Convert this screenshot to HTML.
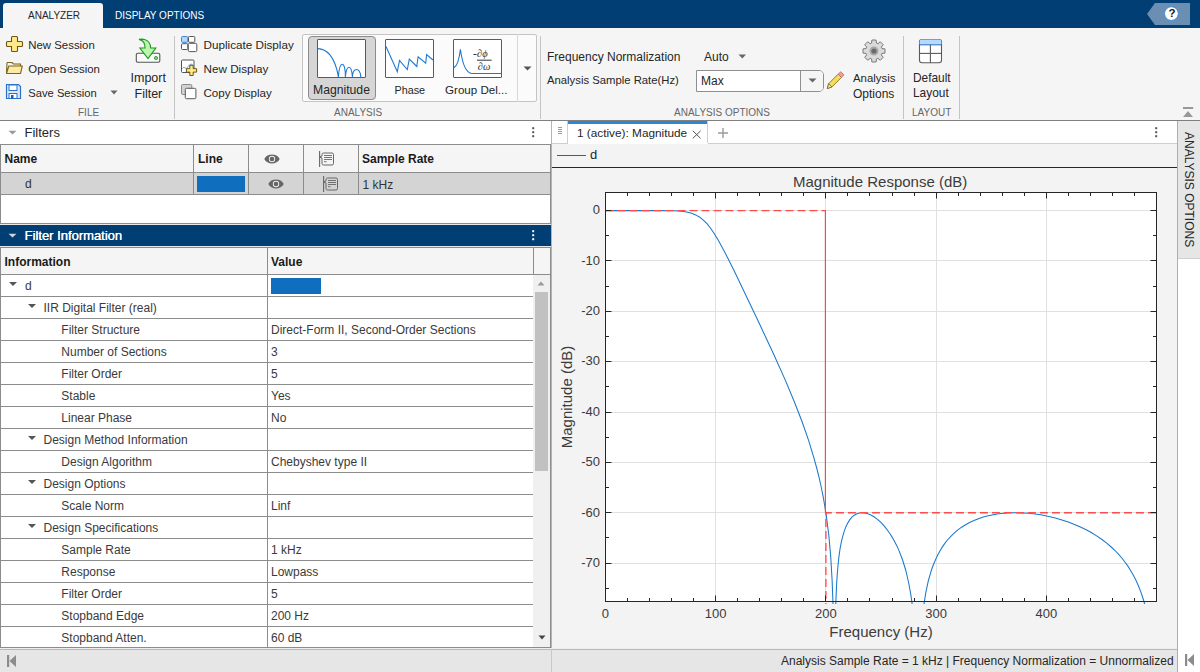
<!DOCTYPE html><html><head><meta charset="utf-8"><style>
html,body{margin:0;padding:0}
body{width:1200px;height:672px;overflow:hidden;position:relative;background:#f5f5f5;font-family:"Liberation Sans",sans-serif}
.a{position:absolute;box-sizing:border-box}
.t{position:absolute;white-space:nowrap;line-height:1}
svg{position:absolute;overflow:visible}
</style></head><body>
<div class="a" style="left:0px;top:0px;width:1200px;height:28px;background:#003e74"></div>
<div class="a" style="left:3px;top:3px;width:100px;height:25px;background:#f5f5f5;border-radius:3px 3px 0 0"></div>
<div class="t" style="left:28px;top:10.54px;font-size:10px;color:#262626;font-weight:400;">ANALYZER</div>
<div class="t" style="left:115px;top:10.54px;font-size:10px;color:#ffffff;font-weight:400;">DISPLAY OPTIONS</div>
<svg style="left:0;top:0" width="1200" height="28"><path d="M1155,3 L1190,3 L1190,25 L1155,25 L1147,14 Z" fill="#6b8fb2"/><circle cx="1171.4" cy="13.6" r="6.9" fill="#fff" stroke="#3d8fe0" stroke-width="1"/></svg>
<div class="t" style="left:1168.6px;top:8.07px;font-size:11.5px;color:#1a1a1a;font-weight:700;">?</div>
<div class="a" style="left:0px;top:28px;width:1200px;height:92px;background:#f5f5f5"></div>
<div class="a" style="left:0px;top:120px;width:1200px;height:1px;background:#808080"></div>
<div class="a" style="left:174px;top:36px;width:1px;height:83px;background:#c4c4c4"></div>
<div class="a" style="left:540px;top:36px;width:1px;height:83px;background:#c4c4c4"></div>
<div class="a" style="left:903px;top:36px;width:1px;height:83px;background:#c4c4c4"></div>
<div class="a" style="left:959px;top:36px;width:1px;height:83px;background:#c4c4c4"></div>
<div class="t" style="left:78px;top:108.23px;font-size:10px;color:#666;font-weight:400;">FILE</div>
<div class="t" style="left:334px;top:108.23px;font-size:10px;color:#666;font-weight:400;">ANALYSIS</div>
<div class="t" style="left:674px;top:108.23px;font-size:10px;color:#666;font-weight:400;">ANALYSIS OPTIONS</div>
<div class="t" style="left:912px;top:108.23px;font-size:10px;color:#666;font-weight:400;">LAYOUT</div>
<div class="t" style="left:28.3px;top:39.95px;font-size:11.4px;color:#262626;font-weight:400;">New Session</div>
<div class="t" style="left:28.3px;top:63.95px;font-size:11.4px;color:#262626;font-weight:400;">Open Session</div>
<div class="t" style="left:28.3px;top:88.12px;font-size:11.2px;color:#262626;font-weight:400;">Save Session</div>
<div class="t" style="left:130.5px;top:71.92px;font-size:12.5px;color:#262626;font-weight:400;">Import</div>
<div class="t" style="left:134.5px;top:87.72px;font-size:12.5px;color:#262626;font-weight:400;">Filter</div>
<div class="t" style="left:203.5px;top:39.10px;font-size:11.7px;color:#262626;font-weight:400;">Duplicate Display</div>
<div class="t" style="left:203.5px;top:63.10px;font-size:11.7px;color:#262626;font-weight:400;">New Display</div>
<div class="t" style="left:203.5px;top:87.18px;font-size:11.6px;color:#262626;font-weight:400;">Copy Display</div>
<div class="a" style="left:302px;top:34px;width:235px;height:68px;background:#fbfbfb;border:1px solid #c4c4c4;border-radius:2px"></div>
<div class="a" style="left:517px;top:34px;width:1px;height:68px;background:#d8d8d8"></div>
<div class="a" style="left:308px;top:36px;width:68px;height:64px;background:#d6d6d6;border:1px solid #8c8c8c;border-radius:4px"></div>
<div class="a" style="left:317px;top:39px;width:49px;height:39px;background:#fff;border:1px solid #5a5a5a;border-radius:1px"></div>
<div class="a" style="left:385px;top:39px;width:49px;height:39px;background:#fff;border:1px solid #5a5a5a;border-radius:1px"></div>
<div class="a" style="left:453px;top:39px;width:49px;height:39px;background:#fff;border:1px solid #5a5a5a;border-radius:1px"></div>
<div class="t" style="left:313px;top:83.67px;font-size:12.2px;color:#262626;font-weight:400;">Magnitude</div>
<div class="t" style="left:394.5px;top:84.86px;font-size:10.8px;color:#262626;font-weight:400;">Phase</div>
<div class="t" style="left:445px;top:84.18px;font-size:11.6px;color:#262626;font-weight:400;">Group Del...</div>
<div class="t" style="left:547px;top:50.84px;font-size:12px;color:#262626;font-weight:400;">Frequency Normalization</div>
<div class="t" style="left:547px;top:75.43px;font-size:11.3px;color:#262626;font-weight:400;">Analysis Sample Rate(Hz)</div>
<div class="t" style="left:704px;top:50.84px;font-size:12px;color:#262626;font-weight:400;">Auto</div>
<div class="a" style="left:696px;top:70px;width:128px;height:22px;background:#fff;border:1px solid #8f8f8f;border-radius:0 5px 5px 0"></div>
<div class="a" style="left:801px;top:71px;width:22px;height:20px;background:#f5f5f5;border-radius:0 4px 4px 0"></div>
<div class="a" style="left:800px;top:70px;width:1px;height:22px;background:#8f8f8f"></div>
<div class="t" style="left:701px;top:75.34px;font-size:12px;color:#262626;font-weight:400;">Max</div>
<div class="t" style="left:853px;top:73.15px;font-size:11.4px;color:#262626;font-weight:400;">Analysis</div>
<div class="t" style="left:853px;top:87.64px;font-size:12px;color:#262626;font-weight:400;">Options</div>
<div class="t" style="left:913px;top:72.73px;font-size:11.9px;color:#262626;font-weight:400;">Default</div>
<div class="t" style="left:913px;top:87.73px;font-size:11.9px;color:#262626;font-weight:400;">Layout</div>
<div class="a" style="left:0px;top:121px;width:551px;height:23px;background:#fff"></div>
<div class="t" style="left:24.5px;top:125.80px;font-size:13px;color:#262626;font-weight:400;">Filters</div>
<div class="a" style="left:0px;top:144px;width:551px;height:80px;background:#fff;border:1px solid #8c8c8c"></div>
<div class="a" style="left:1px;top:145px;width:549px;height:27px;background:#f5f5f5"></div>
<div class="a" style="left:1px;top:172px;width:549px;height:1px;background:#8c8c8c"></div>
<div class="a" style="left:1px;top:173px;width:549px;height:21px;background:#d4d4d4"></div>
<div class="a" style="left:1px;top:194px;width:549px;height:1px;background:#8c8c8c"></div>
<div class="a" style="left:193px;top:145px;width:1px;height:50px;background:#8c8c8c"></div>
<div class="a" style="left:248px;top:145px;width:1px;height:50px;background:#8c8c8c"></div>
<div class="a" style="left:303px;top:145px;width:1px;height:50px;background:#8c8c8c"></div>
<div class="a" style="left:358px;top:145px;width:1px;height:50px;background:#8c8c8c"></div>
<div class="t" style="left:4.5px;top:152.64px;font-size:12px;color:#1a1a1a;font-weight:700;">Name</div>
<div class="t" style="left:198px;top:152.64px;font-size:12px;color:#1a1a1a;font-weight:700;">Line</div>
<div class="t" style="left:362px;top:152.64px;font-size:12px;color:#1a1a1a;font-weight:700;">Sample Rate</div>
<div class="t" style="left:25px;top:177.64px;font-size:12px;color:#333;font-weight:400;">d</div>
<div class="a" style="left:197px;top:176px;width:48px;height:16px;background:#106ebe"></div>
<div class="t" style="left:362.5px;top:178.84px;font-size:12px;color:#333;font-weight:400;">1 kHz</div>
<div class="a" style="left:0px;top:224px;width:551px;height:1px;background:#e8e8e8"></div>
<div class="a" style="left:0px;top:225px;width:551px;height:21px;background:#003e74"></div>
<div class="a" style="left:0px;top:246px;width:551px;height:1px;background:#e8e8e8"></div>
<div class="t" style="left:24.5px;top:228.70px;font-size:13px;color:#fff;font-weight:400;text-shadow:0.3px 0 0 #fff">Filter Information</div>
<div class="a" style="left:0px;top:247px;width:551px;height:401px;background:#fff;border:1px solid #8c8c8c"></div>
<div class="a" style="left:1px;top:248px;width:549px;height:26px;background:#f5f5f5"></div>
<div class="a" style="left:1px;top:274px;width:549px;height:1px;background:#8c8c8c"></div>
<div class="a" style="left:267px;top:248px;width:1px;height:399px;background:#8c8c8c"></div>
<div class="a" style="left:533px;top:248px;width:1px;height:26px;background:#8c8c8c"></div>
<div class="t" style="left:4.5px;top:255.54px;font-size:12px;color:#1a1a1a;font-weight:700;">Information</div>
<div class="t" style="left:271px;top:255.54px;font-size:12px;color:#1a1a1a;font-weight:700;">Value</div>
<svg style="left:9px;top:282px" width="9" height="5"><path d="M0,0 L8,0 L4,4 Z" fill="#555"/></svg>
<div class="t" style="left:25px;top:280.24px;font-size:12px;color:#3a3a3a;font-weight:400;">d</div>
<div class="a" style="left:271px;top:278px;width:50px;height:16px;background:#106ebe"></div>
<div class="a" style="left:1px;top:296px;width:532px;height:1px;background:#8c8c8c"></div>
<svg style="left:27.5px;top:304px" width="9" height="5"><path d="M0,0 L8,0 L4,4 Z" fill="#555"/></svg>
<div class="t" style="left:43.5px;top:302.24px;font-size:12px;color:#3a3a3a;font-weight:400;">IIR Digital Filter (real)</div>
<div class="a" style="left:1px;top:318px;width:532px;height:1px;background:#8c8c8c"></div>
<div class="t" style="left:61.3px;top:324.24px;font-size:12px;color:#3a3a3a;font-weight:400;">Filter Structure</div>
<div class="t" style="left:271px;top:324.24px;font-size:12px;color:#3a3a3a;font-weight:400;">Direct-Form II, Second-Order Sections</div>
<div class="a" style="left:1px;top:340px;width:532px;height:1px;background:#8c8c8c"></div>
<div class="t" style="left:61.3px;top:346.24px;font-size:12px;color:#3a3a3a;font-weight:400;">Number of Sections</div>
<div class="t" style="left:271px;top:346.24px;font-size:12px;color:#3a3a3a;font-weight:400;">3</div>
<div class="a" style="left:1px;top:362px;width:532px;height:1px;background:#8c8c8c"></div>
<div class="t" style="left:61.3px;top:368.24px;font-size:12px;color:#3a3a3a;font-weight:400;">Filter Order</div>
<div class="t" style="left:271px;top:368.24px;font-size:12px;color:#3a3a3a;font-weight:400;">5</div>
<div class="a" style="left:1px;top:384px;width:532px;height:1px;background:#8c8c8c"></div>
<div class="t" style="left:61.3px;top:390.24px;font-size:12px;color:#3a3a3a;font-weight:400;">Stable</div>
<div class="t" style="left:271px;top:390.24px;font-size:12px;color:#3a3a3a;font-weight:400;">Yes</div>
<div class="a" style="left:1px;top:406px;width:532px;height:1px;background:#8c8c8c"></div>
<div class="t" style="left:61.3px;top:412.24px;font-size:12px;color:#3a3a3a;font-weight:400;">Linear Phase</div>
<div class="t" style="left:271px;top:412.24px;font-size:12px;color:#3a3a3a;font-weight:400;">No</div>
<div class="a" style="left:1px;top:428px;width:532px;height:1px;background:#8c8c8c"></div>
<svg style="left:27.5px;top:436px" width="9" height="5"><path d="M0,0 L8,0 L4,4 Z" fill="#555"/></svg>
<div class="t" style="left:43.5px;top:434.24px;font-size:12px;color:#3a3a3a;font-weight:400;">Design Method Information</div>
<div class="a" style="left:1px;top:450px;width:532px;height:1px;background:#8c8c8c"></div>
<div class="t" style="left:61.3px;top:456.24px;font-size:12px;color:#3a3a3a;font-weight:400;">Design Algorithm</div>
<div class="t" style="left:271px;top:456.24px;font-size:12px;color:#3a3a3a;font-weight:400;">Chebyshev type II</div>
<div class="a" style="left:1px;top:472px;width:532px;height:1px;background:#8c8c8c"></div>
<svg style="left:27.5px;top:480px" width="9" height="5"><path d="M0,0 L8,0 L4,4 Z" fill="#555"/></svg>
<div class="t" style="left:43.5px;top:478.24px;font-size:12px;color:#3a3a3a;font-weight:400;">Design Options</div>
<div class="a" style="left:1px;top:494px;width:532px;height:1px;background:#8c8c8c"></div>
<div class="t" style="left:61.3px;top:500.24px;font-size:12px;color:#3a3a3a;font-weight:400;">Scale Norm</div>
<div class="t" style="left:271px;top:500.24px;font-size:12px;color:#3a3a3a;font-weight:400;">Linf</div>
<div class="a" style="left:1px;top:516px;width:532px;height:1px;background:#8c8c8c"></div>
<svg style="left:27.5px;top:524px" width="9" height="5"><path d="M0,0 L8,0 L4,4 Z" fill="#555"/></svg>
<div class="t" style="left:43.5px;top:522.24px;font-size:12px;color:#3a3a3a;font-weight:400;">Design Specifications</div>
<div class="a" style="left:1px;top:538px;width:532px;height:1px;background:#8c8c8c"></div>
<div class="t" style="left:61.3px;top:544.24px;font-size:12px;color:#3a3a3a;font-weight:400;">Sample Rate</div>
<div class="t" style="left:271px;top:544.24px;font-size:12px;color:#3a3a3a;font-weight:400;">1 kHz</div>
<div class="a" style="left:1px;top:560px;width:532px;height:1px;background:#8c8c8c"></div>
<div class="t" style="left:61.3px;top:566.24px;font-size:12px;color:#3a3a3a;font-weight:400;">Response</div>
<div class="t" style="left:271px;top:566.24px;font-size:12px;color:#3a3a3a;font-weight:400;">Lowpass</div>
<div class="a" style="left:1px;top:582px;width:532px;height:1px;background:#8c8c8c"></div>
<div class="t" style="left:61.3px;top:588.24px;font-size:12px;color:#3a3a3a;font-weight:400;">Filter Order</div>
<div class="t" style="left:271px;top:588.24px;font-size:12px;color:#3a3a3a;font-weight:400;">5</div>
<div class="a" style="left:1px;top:604px;width:532px;height:1px;background:#8c8c8c"></div>
<div class="t" style="left:61.3px;top:610.24px;font-size:12px;color:#3a3a3a;font-weight:400;">Stopband Edge</div>
<div class="t" style="left:271px;top:610.24px;font-size:12px;color:#3a3a3a;font-weight:400;">200 Hz</div>
<div class="a" style="left:1px;top:626px;width:532px;height:1px;background:#8c8c8c"></div>
<div class="t" style="left:61.3px;top:632.24px;font-size:12px;color:#3a3a3a;font-weight:400;">Stopband Atten.</div>
<div class="t" style="left:271px;top:632.24px;font-size:12px;color:#3a3a3a;font-weight:400;">60 dB</div>
<div class="a" style="left:533px;top:275px;width:17px;height:372px;background:#f0f0f0"></div>
<div class="a" style="left:535px;top:292px;width:13px;height:179px;background:#c1c1c1"></div>
<div class="a" style="left:551px;top:121px;width:627px;height:527px;background:#f3f3f3"></div>
<div class="a" style="left:551px;top:121px;width:1px;height:527px;background:#b4b4b4"></div>
<div class="a" style="left:552px;top:121px;width:626px;height:22px;background:#fff"></div>
<div class="a" style="left:552px;top:143px;width:626px;height:1px;background:#cfcfcf"></div>
<div class="a" style="left:552px;top:121px;width:15px;height:22px;background:#fff"></div>
<div class="a" style="left:567px;top:121px;width:1px;height:22px;background:#cfcfcf"></div>
<div class="a" style="left:568px;top:121px;width:140px;height:23px;background:#fff"></div>
<div class="a" style="left:568px;top:121px;width:140px;height:3px;background:#2b88d8"></div>
<div class="a" style="left:707px;top:121px;width:1px;height:22px;background:#cfcfcf"></div>
<div class="t" style="left:577px;top:128.21px;font-size:11.8px;color:#262626;font-weight:400;">1 (active): Magnitude</div>
<div class="a" style="left:552px;top:167px;width:625px;height:1px;background:#262626"></div>
<div class="a" style="left:557px;top:155px;width:29px;height:1px;background:#0072bd"></div>
<div class="t" style="left:590px;top:147.80px;font-size:13px;color:#262626;font-weight:400;">d</div>
<div class="a" style="left:605px;top:192px;width:552px;height:410px;background:#fff"></div>
<div class="t" style="left:793px;top:173.70px;font-size:15px;color:#3c3c3c;font-weight:400;">Magnitude Response (dB)</div>
<div class="t" style="left:829.3px;top:623.90px;font-size:15px;color:#3c3c3c;font-weight:400;">Frequency (Hz)</div>
<div class="a" style="left:1178px;top:121px;width:22px;height:527px;background:#fff"></div>
<div class="a" style="left:1178px;top:121px;width:22px;height:138px;background:#e6e6e6;border-bottom:1px solid #d0d0d0"></div>
<div class="t" style="left:1183px;top:132px;font-size:12px;color:#262626;writing-mode:vertical-rl">ANALYSIS OPTIONS</div>
<div class="a" style="left:0px;top:648px;width:1200px;height:24px;background:#e6e6e6"></div>
<div class="a" style="left:0px;top:648px;width:1178px;height:1px;background:#eeeeee"></div>
<div class="a" style="left:0px;top:649px;width:1178px;height:1px;background:#b8b8b8"></div>
<div class="a" style="left:551px;top:649px;width:1px;height:23px;background:#c8c8c8"></div>
<div class="a" style="left:1178px;top:648px;width:22px;height:24px;background:#fff"></div>
<div class="t" style="left:781px;top:654.84px;font-size:12px;color:#262626;font-weight:400;">Analysis Sample Rate = 1 kHz | Frequency Normalization = Unnormalized</div>
<div class="a" style="left:1177px;top:121px;width:1px;height:551px;background:#adadad"></div>
<svg style="left:0;top:0" width="1200" height="672"><defs><clipPath id="ax"><rect x="605" y="192" width="552" height="412"/></clipPath></defs><line x1="715.5" y1="192.5" x2="715.5" y2="601.5" stroke="#e0e0e0" stroke-width="1"/><line x1="825.5" y1="192.5" x2="825.5" y2="601.5" stroke="#e0e0e0" stroke-width="1"/><line x1="936.5" y1="192.5" x2="936.5" y2="601.5" stroke="#e0e0e0" stroke-width="1"/><line x1="1046.5" y1="192.5" x2="1046.5" y2="601.5" stroke="#e0e0e0" stroke-width="1"/><line x1="605.5" y1="210.5" x2="1156.5" y2="210.5" stroke="#e0e0e0" stroke-width="1"/><line x1="605.5" y1="260.5" x2="1156.5" y2="260.5" stroke="#e0e0e0" stroke-width="1"/><line x1="605.5" y1="311.5" x2="1156.5" y2="311.5" stroke="#e0e0e0" stroke-width="1"/><line x1="605.5" y1="361.5" x2="1156.5" y2="361.5" stroke="#e0e0e0" stroke-width="1"/><line x1="605.5" y1="412.5" x2="1156.5" y2="412.5" stroke="#e0e0e0" stroke-width="1"/><line x1="605.5" y1="462.5" x2="1156.5" y2="462.5" stroke="#e0e0e0" stroke-width="1"/><line x1="605.5" y1="512.5" x2="1156.5" y2="512.5" stroke="#e0e0e0" stroke-width="1"/><line x1="605.5" y1="563.5" x2="1156.5" y2="563.5" stroke="#e0e0e0" stroke-width="1"/><g clip-path="url(#ax)"><path d="M605.3,210.6 L658.1,210.6 L672.8,210.8 L678.9,211.1 L683.7,211.6 L687.9,212.3 L691.6,213.3 L695.8,214.9 L699.7,217.2 L703.3,220.1 L707.0,223.7 L710.6,228.2 L714.3,233.7 L718.3,240.3 L722.8,248.4 L728.0,258.5 L734.5,271.6 L758.4,321.6 L773.8,354.5 L785.3,380.1 L794.3,401.7 L802.0,421.5 L808.6,440.4 L814.1,458.7 L816.7,468.0 L819.0,477.2 L821.1,486.5 L823.0,495.8 L824.7,505.3 L826.2,514.9 L828.8,535.0 L830.7,556.4 L832.1,579.9 L833.1,606.4 L833.7,640.0 L834.9,640.0 L835.6,608.1 L836.6,584.1 L837.3,573.7 L838.1,564.5 L839.0,556.1 L840.1,548.5 L841.3,542.1 L842.7,536.4 L844.2,531.3 L845.8,526.9 L847.7,523.1 L849.7,519.9 L851.9,517.2 L854.3,515.2 L856.4,514.0 L858.6,513.2 L860.9,512.8 L863.4,512.7 L865.9,513.2 L868.6,514.0 L871.3,515.2 L874.0,516.8 L876.8,518.8 L879.5,521.1 L882.3,523.8 L884.9,526.9 L887.5,530.2 L890.0,533.8 L892.4,537.6 L894.7,541.7 L896.9,545.9 L898.9,550.4 L902.6,560.0 L905.8,570.5 L908.5,582.0 L910.8,594.4 L912.7,608.0 L914.2,622.8 L915.4,640.0 L920.5,640.0 L921.9,621.8 L923.6,606.4 L925.8,592.7 L928.4,580.5 L930.0,574.9 L931.6,569.5 L933.5,564.5 L935.5,559.7 L937.6,555.2 L939.9,551.0 L942.4,546.9 L945.0,543.1 L947.9,539.5 L951.1,536.1 L954.4,532.9 L957.9,529.9 L961.6,527.2 L965.5,524.7 L969.6,522.5 L973.9,520.5 L978.5,518.7 L983.2,517.1 L988.2,515.8 L993.3,514.7 L998.6,513.8 L1004.1,513.2 L1009.8,512.8 L1015.5,512.7 L1022.1,512.9 L1028.7,513.3 L1035.4,514.1 L1042.1,515.1 L1048.8,516.4 L1055.4,518.0 L1061.9,519.9 L1068.3,522.0 L1074.5,524.4 L1080.4,527.0 L1086.2,529.8 L1091.7,532.8 L1097.0,536.1 L1102.0,539.5 L1106.7,543.2 L1111.2,547.0 L1115.0,550.5 L1118.5,554.2 L1121.8,558.0 L1124.9,562.0 L1127.9,566.1 L1130.6,570.4 L1133.2,574.9 L1135.6,579.5 L1138.4,585.7 L1140.9,592.1 L1143.2,599.0 L1145.3,606.2 L1147.1,613.9 L1148.8,622.0 L1150.2,630.7 L1151.4,640.0 L1156.7,640.0" stroke="#1a78cc" stroke-width="1.05" fill="none"/><path d="M605.5,210.6 H825.9" stroke="#ff4d4d" stroke-width="1.35" stroke-dasharray="8,4" fill="none"/><path d="M825.4,210.6 V512.7" stroke="#ff4040" stroke-width="1.15" fill="none"/><path d="M825.9,512.7 H1156.5" stroke="#ff4d4d" stroke-width="1.35" stroke-dasharray="8,4" stroke-dashoffset="2" fill="none"/></g><path d="M825.9,512.7 V604" stroke="#ff4d4d" stroke-width="1.35" stroke-dasharray="8,4" stroke-dashoffset="5.6" fill="none"/><rect x="605.5" y="192.5" width="551.0" height="409.0" fill="none" stroke="#262626" stroke-width="1"/><path d="M605.5,601.5 v-6 M605.5,192.5 v6 M627.5,601.5 v-3.5 M627.5,192.5 v3.5 M649.5,601.5 v-3.5 M649.5,192.5 v3.5 M671.5,601.5 v-3.5 M671.5,192.5 v3.5 M693.5,601.5 v-3.5 M693.5,192.5 v3.5 M715.5,601.5 v-6 M715.5,192.5 v6 M737.5,601.5 v-3.5 M737.5,192.5 v3.5 M759.5,601.5 v-3.5 M759.5,192.5 v3.5 M781.5,601.5 v-3.5 M781.5,192.5 v3.5 M803.5,601.5 v-3.5 M803.5,192.5 v3.5 M825.5,601.5 v-6 M825.5,192.5 v6 M847.5,601.5 v-3.5 M847.5,192.5 v3.5 M869.5,601.5 v-3.5 M869.5,192.5 v3.5 M892.5,601.5 v-3.5 M892.5,192.5 v3.5 M914.5,601.5 v-3.5 M914.5,192.5 v3.5 M936.5,601.5 v-6 M936.5,192.5 v6 M958.5,601.5 v-3.5 M958.5,192.5 v3.5 M980.5,601.5 v-3.5 M980.5,192.5 v3.5 M1002.5,601.5 v-3.5 M1002.5,192.5 v3.5 M1024.5,601.5 v-3.5 M1024.5,192.5 v3.5 M1046.5,601.5 v-6 M1046.5,192.5 v6 M1068.5,601.5 v-3.5 M1068.5,192.5 v3.5 M1090.5,601.5 v-3.5 M1090.5,192.5 v3.5 M1112.5,601.5 v-3.5 M1112.5,192.5 v3.5 M1134.5,601.5 v-3.5 M1134.5,192.5 v3.5 M1156.5,601.5 v-6 M1156.5,192.5 v6 M605.5,210.5 h6 M1156.5,210.5 h-6 M605.5,235.5 h3.5 M1156.5,235.5 h-3.5 M605.5,260.5 h6 M1156.5,260.5 h-6 M605.5,286.5 h3.5 M1156.5,286.5 h-3.5 M605.5,311.5 h6 M1156.5,311.5 h-6 M605.5,336.5 h3.5 M1156.5,336.5 h-3.5 M605.5,361.5 h6 M1156.5,361.5 h-6 M605.5,386.5 h3.5 M1156.5,386.5 h-3.5 M605.5,412.5 h6 M1156.5,412.5 h-6 M605.5,437.5 h3.5 M1156.5,437.5 h-3.5 M605.5,462.5 h6 M1156.5,462.5 h-6 M605.5,487.5 h3.5 M1156.5,487.5 h-3.5 M605.5,512.5 h6 M1156.5,512.5 h-6 M605.5,537.5 h3.5 M1156.5,537.5 h-3.5 M605.5,563.5 h6 M1156.5,563.5 h-6 M605.5,588.5 h3.5 M1156.5,588.5 h-3.5" stroke="#262626" stroke-width="1" fill="none"/></svg>
<div class="t" style="right:600px;top:203.4px;font-size:13px;color:#3a3a3a">0</div>
<div class="t" style="right:600px;top:253.8px;font-size:13px;color:#3a3a3a">-10</div>
<div class="t" style="right:600px;top:304.1px;font-size:13px;color:#3a3a3a">-20</div>
<div class="t" style="right:600px;top:354.4px;font-size:13px;color:#3a3a3a">-30</div>
<div class="t" style="right:600px;top:404.8px;font-size:13px;color:#3a3a3a">-40</div>
<div class="t" style="right:600px;top:455.2px;font-size:13px;color:#3a3a3a">-50</div>
<div class="t" style="right:600px;top:505.5px;font-size:13px;color:#3a3a3a">-60</div>
<div class="t" style="right:600px;top:555.8px;font-size:13px;color:#3a3a3a">-70</div>
<div class="t" style="left:575.3px;width:60px;text-align:center;top:607.0px;font-size:13px;color:#3a3a3a">0</div>
<div class="t" style="left:685.6px;width:60px;text-align:center;top:607.0px;font-size:13px;color:#3a3a3a">100</div>
<div class="t" style="left:795.9px;width:60px;text-align:center;top:607.0px;font-size:13px;color:#3a3a3a">200</div>
<div class="t" style="left:906.1px;width:60px;text-align:center;top:607.0px;font-size:13px;color:#3a3a3a">300</div>
<div class="t" style="left:1016.4px;width:60px;text-align:center;top:607.0px;font-size:13px;color:#3a3a3a">400</div>
<div class="t" style="left:565.5px;top:396.5px;font-size:15px;color:#3c3c3c;transform:translate(-50%,-50%) rotate(-90deg);transform-origin:center"><span>Magnitude (dB)</span></div>
<svg style="left:5.5px;top:35px" width="18" height="18" viewBox="0 0 18 18"><path d="M6.5,1.5 h4 a1,1 0 0 1 1,1 v4 h4 a1,1 0 0 1 1,1 v3 a1,1 0 0 1 -1,1 h-4 v4 a1,1 0 0 1 -1,1 h-4 a1,1 0 0 1 -1,-1 v-4 h-4 a1,1 0 0 1 -1,-1 v-3 a1,1 0 0 1 1,-1 h4 v-4 a1,1 0 0 1 1,-1 z" fill="#ffe98a" stroke="#6b5714" stroke-width="1.1"/></svg>
<svg style="left:5px;top:59px" width="19" height="17" viewBox="0 0 19 17"><path d="M2,3.5 h5 l1.5,1.5 h7 v2.5" fill="#fbe9a6" stroke="#7a6522" stroke-width="1.1"/><path d="M1.5,14.5 L2,3.5 M1.5,14.5 h14 l1.8,-7.5 h-13.5 z" fill="#fbe9a6" stroke="#7a6522" stroke-width="1.1" stroke-linejoin="round"/></svg>
<svg style="left:5px;top:83px" width="17" height="17" viewBox="0 0 17 17"><path d="M1.5,1.5 h12 l2,2 v12 h-14 z" fill="#d6e9ff" stroke="#2a72c9" stroke-width="1.2"/><rect x="4" y="2" width="8" height="5.5" fill="#fff" stroke="#2a72c9" stroke-width="1"/><rect x="4" y="10.5" width="8" height="5" fill="#fff" stroke="#2a72c9" stroke-width="1"/><rect x="6" y="12" width="2.5" height="3.5" fill="#1f5fa8"/></svg>
<svg style="left:110px;top:90px" width="9" height="6" viewBox="0 0 9 6"><path d="M0.5,0.5 h7 l-3.5,4 z" fill="#666"/></svg>
<svg style="left:738px;top:54px" width="9" height="6" viewBox="0 0 9 6"><path d="M0.5,0.5 h7.5 l-3.75,4 z" fill="#666"/></svg>
<svg style="left:807.5px;top:78px" width="10" height="6" viewBox="0 0 10 6"><path d="M0.5,0.5 h8 l-4,4 z" fill="#666"/></svg>
<svg style="left:522.5px;top:66px" width="10" height="6" viewBox="0 0 10 6"><path d="M0.5,0.5 h8 l-4,4 z" fill="#555"/></svg>
<svg style="left:134px;top:37px" width="28" height="28" viewBox="0 0 28 28"><rect x="2.3" y="16.3" width="23.5" height="9" rx="1.5" fill="#fafafa" stroke="#555" stroke-width="1.1"/><circle cx="22" cy="21" r="1.6" fill="#7fd67f" stroke="#2e9e2e" stroke-width="0.9"/><path d="M5,2.4 C11,1.2 16.6,4 16.6,11 L21.8,11 L14,21.6 L5.9,11 L11.1,11 C11.1,6.5 9,3.2 5,2.4 z" fill="#bdf5b0" stroke="#1f9a1f" stroke-width="1.15" stroke-linejoin="miter"/></svg>
<svg style="left:180px;top:35px" width="19" height="19" viewBox="0 0 19 19"><rect x="1.5" y="1.5" width="6.3" height="5.8" rx="1" fill="#b5d8ff" stroke="#3a86d6" stroke-width="1"/><rect x="8.5" y="1.5" width="6.3" height="5.8" rx="1" fill="#fff" stroke="#555" stroke-width="1"/><rect x="1.5" y="8.7" width="6.3" height="5.8" rx="1" fill="#fff" stroke="#555" stroke-width="1"/><rect x="8.3" y="8.3" width="8.5" height="8.3" rx="1.2" fill="#fff" stroke="#555" stroke-width="1"/></svg>
<svg style="left:180px;top:58px" width="19" height="19" viewBox="0 0 19 19"><rect x="1.5" y="2" width="12.5" height="12.5" rx="1" fill="#fff" stroke="#555" stroke-width="1"/><path d="M2.5,10.5 C4,7.5 5.5,12 7.5,9.5 C9,7 10.5,5.5 12.5,6.5" fill="none" stroke="#4a90e2" stroke-width="0.9"/><path d="M9.8,7.3 h3.4 v3.4 h3.4 v3.4 h-3.4 v3.4 h-3.4 v-3.4 h-3.4 v-3.4 h3.4 z" fill="#ffe98a" stroke="#6b5714" stroke-width="1" stroke-linejoin="round"/></svg>
<svg style="left:180px;top:83px" width="19" height="18" viewBox="0 0 19 18"><rect x="1.5" y="1.5" width="10.3" height="10" rx="1.2" fill="#d2d2d2" stroke="#8a8a8a" stroke-width="1"/><rect x="5.3" y="5.3" width="10.6" height="10.4" rx="1.2" fill="#fff" stroke="#555" stroke-width="1"/></svg>
<svg style="left:317px;top:39px" width="49" height="39" viewBox="0 0 49 39"><path d="M1,9.6 C9,9.6 18,17 21.4,38 M21.4,38 C22.5,21 28.5,21 28.4,38 C29.5,25 34.5,25 35.4,38 C36,28 43,28 43.8,38" fill="none" stroke="#1f78d1" stroke-width="1.1"/></svg>
<svg style="left:385px;top:39px" width="49" height="39" viewBox="0 0 49 39"><path d="M1,7.5 L12.3,32.7 L14.5,21.5 L22.3,30.5 L24.3,20.1 L31.8,27.5 L33.1,17.75 L40.7,24.25 L41.6,15.6 L48,21" fill="none" stroke="#1f78d1" stroke-width="1.1" stroke-linejoin="miter"/></svg>
<svg style="left:453px;top:39px" width="49" height="39" viewBox="0 0 49 39"><path d="M1,28.8 C4,27 6,22 7.4,10.2 C9,22 12,34 19,34.5 L48,34.5" fill="none" stroke="#1f78d1" stroke-width="1.1"/><line x1="24" y1="21.2" x2="38.6" y2="21.2" stroke="#333" stroke-width="1"/><line x1="20.5" y1="15.5" x2="23.5" y2="15.5" stroke="#333" stroke-width="1"/><text x="24" y="18.3" font-family="Liberation Serif" font-style="italic" font-size="10.5" fill="#333">∂ϕ</text><text x="24.8" y="31" font-family="Liberation Serif" font-style="italic" font-size="10.5" fill="#333">∂ω</text></svg>
<svg style="left:825px;top:71px" width="21" height="20" viewBox="0 0 21 20"><path d="M2.3,17.5 L3.67,12.67 L13.17,3.17 L16.43,6.43 L6.93,15.93 z" fill="#f7de5a" stroke="#806a10" stroke-width="0.9" stroke-linejoin="round"/><path d="M13.17,3.17 L15.67,0.67 L18.93,3.93 L16.43,6.43 z" fill="#f59a9a" stroke="#b86a6a" stroke-width="0.8"/><path d="M2.3,17.5 L3.67,12.67 L6.93,15.93 z" fill="#efe3bd" stroke="#806a10" stroke-width="0.8" stroke-linejoin="round"/></svg>
<svg style="left:861.5px;top:38.5px" width="24" height="24" viewBox="0 0 24 24"><polygon points="19.93,9.55 23.00,9.88 23.00,14.12 19.93,14.45 19.34,15.87 21.27,18.28 18.28,21.27 15.87,19.34 14.45,19.93 14.12,23.00 9.88,23.00 9.55,19.93 8.13,19.34 5.72,21.27 2.73,18.28 4.66,15.87 4.07,14.45 1.00,14.12 1.00,9.88 4.07,9.55 4.66,8.13 2.73,5.72 5.72,2.73 8.13,4.66 9.55,4.07 9.88,1.00 14.12,1.00 14.45,4.07 15.87,4.66 18.28,2.73 21.27,5.72 19.34,8.13" fill="#dadada" stroke="#7a7a7a" stroke-width="1" stroke-linejoin="round"/><circle cx="12" cy="12" r="4.5" fill="#a8a8a8"/><circle cx="12" cy="12" r="2.6" fill="#6a6a6a"/></svg>
<svg style="left:918px;top:38px" width="25" height="26" viewBox="0 0 25 26"><rect x="1.5" y="1.5" width="22" height="23.3" rx="2.5" fill="#fff" stroke="#5a5a5a" stroke-width="1.1"/><path d="M1.6,4 a2.4,2.4 0 0 1 2.4,-2.4 h17 a2.4,2.4 0 0 1 2.4,2.4 v2.3 h-21.8 z" fill="#b5d9ff"/><line x1="1.5" y1="6.8" x2="23.5" y2="6.8" stroke="#2a72c9" stroke-width="1.1"/><line x1="12.4" y1="6.8" x2="12.4" y2="24.8" stroke="#5a5a5a" stroke-width="1.1"/><line x1="1.5" y1="15.4" x2="23.5" y2="15.4" stroke="#5a5a5a" stroke-width="1.1"/></svg>
<svg style="left:1182px;top:106px" width="12" height="12" viewBox="0 0 12 12"><rect x="1" y="1" width="10.2" height="2" fill="#999"/><path d="M1,11 L6,5 L11,11 z" fill="#999"/></svg>
<svg style="left:7.5px;top:129.5px" width="10" height="6" viewBox="0 0 10 6"><path d="M0.5,0.8 h8 l-4,3.8 z" fill="#9a9a9a"/></svg>
<svg style="left:7.5px;top:232.5px" width="10" height="6" viewBox="0 0 10 6"><path d="M0.5,0.8 h8 l-4,3.8 z" fill="#d0d4da"/></svg>
<svg style="left:532px;top:127px" width="3" height="11" viewBox="0 0 3 11"><rect x="0.2" y="0.2" width="2" height="2" fill="#555"/><rect x="0.2" y="4.2" width="2" height="2" fill="#555"/><rect x="0.2" y="8.2" width="2" height="2" fill="#555"/></svg>
<svg style="left:532px;top:230px" width="3" height="11" viewBox="0 0 3 11"><rect x="0.2" y="0.2" width="2" height="2" fill="#fff"/><rect x="0.2" y="4.2" width="2" height="2" fill="#fff"/><rect x="0.2" y="8.2" width="2" height="2" fill="#fff"/></svg>
<svg style="left:1154.5px;top:127px" width="3" height="11" viewBox="0 0 3 11"><rect x="0.2" y="0.2" width="2" height="2" fill="#555"/><rect x="0.2" y="4.2" width="2" height="2" fill="#555"/><rect x="0.2" y="8.2" width="2" height="2" fill="#555"/></svg>
<svg style="left:263.5px;top:153.5px" width="16" height="10" viewBox="0 0 16 10"><path d="M0.3,5 C3,-0.9 13,-0.9 15.7,5 C13,10.9 3,10.9 0.3,5 z" fill="#666"/><circle cx="8" cy="5" r="3.2" fill="#eeeeee"/><circle cx="8" cy="5" r="2.3" fill="#666"/></svg>
<svg style="left:267.5px;top:178.5px" width="16" height="10" viewBox="0 0 16 10"><path d="M0.3,5 C3,-0.9 13,-0.9 15.7,5 C13,10.9 3,10.9 0.3,5 z" fill="#666"/><circle cx="8" cy="5" r="3.2" fill="#eeeeee"/><circle cx="8" cy="5" r="2.3" fill="#666"/></svg>
<svg style="left:319px;top:151px" width="16" height="17" viewBox="0 0 16 17"><line x1="0.6" y1="0" x2="0.6" y2="16" stroke="#666" stroke-width="1.1"/><path d="M0.6,6 L3,5 V3.5 a1.5,1.5 0 0 1 1.5,-1.5 h8.5 a1.5,1.5 0 0 1 1.5,1.5 v9 a1.5,1.5 0 0 1 -1.5,1.5 h-8.5 a1.5,1.5 0 0 1 -1.5,-1.5 V7 z" fill="none" stroke="#666" stroke-width="1"/><path d="M5,4.5 h8 M5,6.5 h8 M5,8.5 h8 M5,10.7 h2.5" stroke="#666" stroke-width="0.9"/></svg>
<svg style="left:323px;top:176px" width="16" height="17" viewBox="0 0 16 17"><line x1="0.6" y1="0" x2="0.6" y2="16" stroke="#666" stroke-width="1.1"/><path d="M0.6,6 L3,5 V3.5 a1.5,1.5 0 0 1 1.5,-1.5 h8.5 a1.5,1.5 0 0 1 1.5,1.5 v9 a1.5,1.5 0 0 1 -1.5,1.5 h-8.5 a1.5,1.5 0 0 1 -1.5,-1.5 V7 z" fill="none" stroke="#666" stroke-width="1"/><path d="M5,4.5 h8 M5,6.5 h8 M5,8.5 h8 M5,10.7 h2.5" stroke="#666" stroke-width="0.9"/></svg>
<svg style="left:558px;top:126px" width="6" height="10" viewBox="0 0 6 10"><path d="M0,1.5 h4 M0,3.5 h4 M0,5.5 h4 M0,7.5 h4" stroke="#9a9a9a" stroke-width="1"/></svg>
<svg style="left:692px;top:130px" width="10" height="9" viewBox="0 0 10 9"><path d="M0.8,0.8 L8.6,8.4 M8.6,0.8 L0.8,8.4" stroke="#555" stroke-width="1"/></svg>
<svg style="left:717px;top:126.5px" width="12" height="12" viewBox="0 0 12 12"><path d="M6,1 V11 M1,6 H11" stroke="#9a9a9a" stroke-width="1.4"/></svg>
<svg style="left:6px;top:654px" width="11" height="14" viewBox="0 0 11 14"><rect x="1" y="1" width="2.2" height="12" fill="#8c8c8c"/><path d="M3.5,7 L10,1 V13 z" fill="#8c8c8c"/></svg>
<svg style="left:1184px;top:653px" width="11" height="14" viewBox="0 0 11 14"><rect x="1" y="1" width="2.2" height="12" fill="#8c8c8c"/><path d="M3.5,7 L10,1 V13 z" fill="#8c8c8c"/></svg>
<svg style="left:537px;top:281px" width="9" height="6" viewBox="0 0 9 6"><path d="M0.5,4.5 h7 l-3.5,-4 z" fill="#9a9a9a"/></svg>
<svg style="left:538px;top:635px" width="9" height="6" viewBox="0 0 9 6"><path d="M0.5,0.5 h7 l-3.5,4 z" fill="#444"/></svg>
</body></html>
